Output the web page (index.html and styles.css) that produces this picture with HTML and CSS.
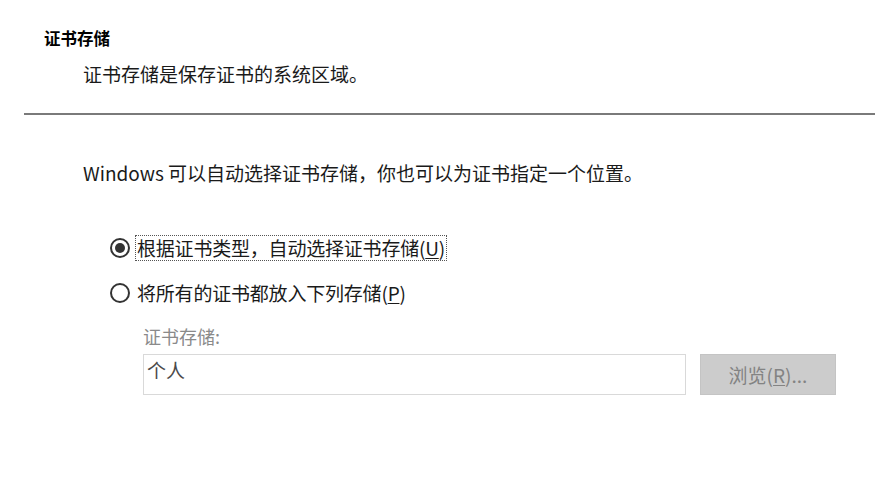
FILE: index.html
```html
<!DOCTYPE html>
<html lang="zh-CN">
	<head>
		<meta charset="utf-8" />
		<title>证书导入向导</title>
		<link rel="stylesheet" href="styles.css">
	</head>
	<body>
		<div id="divHeader">
			<h1>证书存储</h1>
			<p class="subtitle">证书存储是保存证书的系统区域。</p>
		</div>
		<div class="divider"></div>
		<div id="divContent">
			<p class="intro">Windows 可以自动选择证书存储，你也可以为证书指定一个位置。</p>
			<div class="options">
				<label class="option">
					<span class="radio checked"></span>
					<span class="optionText focused">根据证书类型，自动选择证书存储(<u>U</u>)</span>
				</label>
				<label class="option">
					<span class="radio"></span>
					<span class="optionText">将所有的证书都放入下列存储(<u>P</u>)</span>
				</label>
			</div>
			<div class="storeBox">
				<div class="storeLabel">证书存储:</div>
				<div class="storeRow">
					<div class="storeInput">个人</div>
					<button class="browse">浏览(<u>R</u>)...</button>
				</div>
			</div>
		</div>
	</body>
</html>
```

FILE: styles.css
```css
body {
	margin: 0;
	background: #ffffff;
	color: #1a1a1a;
	font-family: "Noto Sans CJK SC", "Noto Sans", sans-serif;
}
#divHeader {
	padding-top: 28px;
}
h1 {
	margin: 0 0 0 44px;
	font-size: 16.5px;
	line-height: 20px;
	font-weight: bold;
	color: #000000;
}
.subtitle {
	margin: 14px 0 0 83px;
	font-size: 19px;
	line-height: 24px;
}
.divider {
	margin: 27px 0 0 24px;
	height: 2px;
	background: #7a7a7a;
}
#divContent {
	padding-left: 83px;
}
.intro {
	margin: 46px 0 0 0;
	font-size: 19px;
	line-height: 24px;
}
.options {
	margin-top: 50px;
	margin-left: 27px;
	display: flex;
	flex-direction: column;
	gap: 19px;
}
.option {
	display: flex;
	flex-direction: row;
	align-items: center;
	gap: 5px;
	font-size: 19px;
	line-height: 24px;
}
.radio {
	width: 16px;
	height: 16px;
	border: 2px solid #333333;
	border-radius: 50%;
	display: flex;
	align-items: center;
	justify-content: center;
}
.radio.checked::after {
	content: "";
	width: 10px;
	height: 10px;
	border-radius: 50%;
	background: #333333;
}
.optionText {
	padding: 0 1px;
	border: 1px dotted transparent;
	letter-spacing: -0.2px;
}
.optionText.focused {
	border-color: #555555;
}
u {
	text-underline-offset: 2px;
}
.storeBox {
	margin-top: 18px;
	margin-left: 60px;
}
.storeLabel {
	font-size: 18px;
	line-height: 24px;
	color: #8a8a8a;
}
.storeRow {
	margin-top: 6px;
	display: flex;
	flex-direction: row;
	gap: 14px;
}
.storeInput {
	border: 1px solid #d9d9d9;
	padding: 0 3px;
	box-sizing: border-box;
	width: 543px;
	height: 41px;
	font-size: 19px;
	line-height: 30px;
	color: #4a4a4a;
}
.browse {
	width: 136px;
	height: 41px;
	border: 1px solid #c4c4c4;
	background: #cccccc;
	color: #838383;
	font-family: "Noto Sans CJK SC", "Noto Sans", sans-serif;
	font-size: 19px;
	padding: 0;
}
```
